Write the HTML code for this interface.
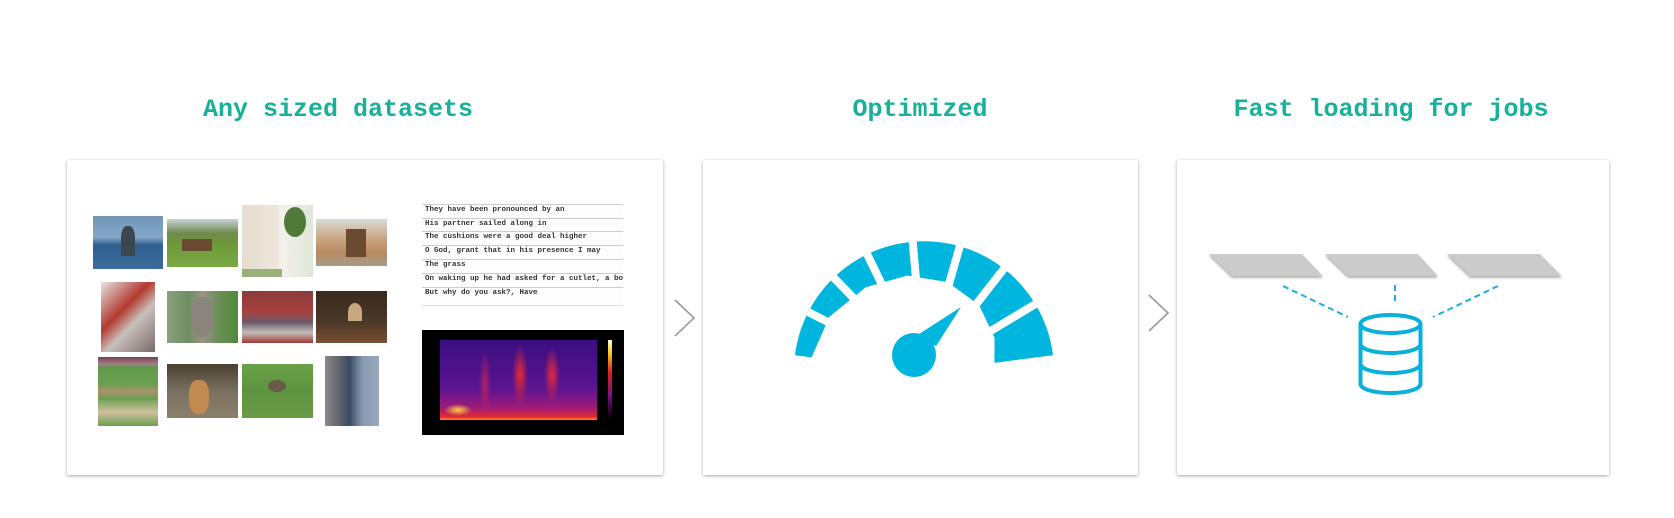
<!DOCTYPE html>
<html><head><meta charset="utf-8"><style>
html,body{margin:0;padding:0;background:#fff;}
body{width:1674px;height:518px;position:relative;overflow:hidden;font-family:"Liberation Sans",sans-serif;}
.t{position:absolute;top:95px;font-family:"Liberation Mono",monospace;font-weight:bold;font-size:25px;color:#17b09a;white-space:nowrap;transform:translateX(-50%);}
.card{position:absolute;top:160px;height:315px;background:#fff;box-shadow:0 1px 3px rgba(0,0,0,.35);}
.im{position:absolute;}
.tx{position:absolute;left:422px;width:201px;font-family:"Liberation Mono",monospace;font-size:7.5px;font-weight:bold;color:#333;border-top:1px solid #ccc;height:13.5px;line-height:11px;padding-left:3px;box-sizing:border-box;background:#fdfdfd;white-space:nowrap;overflow:hidden}
</style></head><body>
<div class="t" style="left:338px">Any sized datasets</div>
<div class="t" style="left:920px">Optimized</div>
<div class="t" style="left:1391px">Fast loading for jobs</div>

<div class="card" style="left:67px;width:596px"></div>
<div class="card" style="left:703px;width:435px"></div>
<div class="card" style="left:1177px;width:432px"></div>

<div class="im" style="left:93px;top:216px;width:70px;height:53px;background:linear-gradient(#6f95b8 0%,#86a6c6 40%,#2f5f8f 55%,#3c6c99 100%)"><div style="position:absolute;left:28px;top:10px;width:14px;height:30px;background:#3a4650;border-radius:40% 40% 0 0"></div></div>
<div class="im" style="left:167px;top:219px;width:71px;height:48px;background:linear-gradient(#c8d2d8 0%,#6f8a4a 30%,#6f9a3a 55%,#7aa845 100%)"><div style="position:absolute;left:15px;top:20px;width:30px;height:12px;background:#6b4a32"></div></div>
<div class="im" style="left:242px;top:205px;width:71px;height:72px;background:linear-gradient(90deg,#e6dccf 0%,#eee6dc 50%,#f3f1ec 55%,#dfe6d8 100%)"><div style="position:absolute;left:42px;top:2px;width:22px;height:30px;background:#4f7a3a;border-radius:50%"></div><div style="position:absolute;left:0;top:64px;width:40px;height:8px;background:#9ab07a"></div></div>
<div class="im" style="left:316px;top:219px;width:71px;height:47px;background:linear-gradient(#d8dcd8 0%,#c9a886 40%,#b88a62 70%,#a79a8a 100%)"><div style="position:absolute;left:30px;top:10px;width:20px;height:28px;background:#6b4a32"></div></div>

<div class="im" style="left:101px;top:282px;width:54px;height:70px;background:linear-gradient(135deg,#e8e2e0,#b23a30 40%,#c8c0bc 60%,#7a6a6a)"></div>
<div class="im" style="left:167px;top:291px;width:71px;height:52px;background:linear-gradient(90deg,#8aa080,#6f8e60 30%,#9a9488 50%,#6f8e5a 70%,#4f8a3a)"><div style="position:absolute;left:24px;top:6px;width:22px;height:40px;background:#8a857c;border-radius:40%"></div></div>
<div class="im" style="left:242px;top:291px;width:71px;height:52px;background:linear-gradient(#8a3a3a 0%,#a84040 40%,#6a5a6a 60%,#c2bcb8 80%,#a03a34 100%)"></div>
<div class="im" style="left:316px;top:291px;width:71px;height:52px;background:linear-gradient(#3a2a1e,#4a3828 60%,#7a5030 100%)"><div style="position:absolute;left:32px;top:12px;width:14px;height:18px;background:#c8a880;border-radius:50% 50% 0 0"></div></div>

<div class="im" style="left:98px;top:357px;width:60px;height:69px;background:linear-gradient(#7a4050 0%,#a08088 10%,#5f9a4a 15%,#6aa050 40%,#b09070 50%,#6aa050 60%,#d0c0a0 80%,#6aa050 100%)"></div>
<div class="im" style="left:167px;top:364px;width:71px;height:54px;background:linear-gradient(#4a4030,#7a7060 50%,#8a806a)"><div style="position:absolute;left:22px;top:16px;width:20px;height:34px;background:#c08a50;border-radius:40%"></div></div>
<div class="im" style="left:242px;top:364px;width:71px;height:54px;background:linear-gradient(#6aa048,#5e9440 50%,#6a9a48)"><div style="position:absolute;left:26px;top:16px;width:18px;height:12px;background:#6a5a4a;border-radius:50%"></div></div>
<div class="im" style="left:325px;top:356px;width:54px;height:70px;background:linear-gradient(90deg,#8a8a8a,#5a5e66 30%,#3a4a66 45%,#8a9ab0 70%,#9aa8c0 100%)"></div>

<div class="tx" style="top:204px">They have been pronounced by an</div>
<div class="tx" style="top:217.5px">His partner sailed along in</div>
<div class="tx" style="top:231px">The cushions were a good deal higher</div>
<div class="tx" style="top:245px">O God, grant that in his presence I may</div>
<div class="tx" style="top:259px">The grass</div>
<div class="tx" style="top:273px">On waking up he had asked for a cutlet, a bottle of</div>
<div class="tx" style="top:287px;border-bottom:1px solid #ddd;height:19px">But why do you ask?, Have</div>

<div class="im" style="left:422px;top:330px;width:202px;height:105px;background:#000">
 <div style="position:absolute;left:18px;top:10px;width:157px;height:80px;background:
 radial-gradient(ellipse 14px 6px at 18px 70px,#ffd040,rgba(255,80,0,0) 100%),
 radial-gradient(ellipse 8px 30px at 80px 35px,#e82a30,rgba(200,30,80,0) 100%),
 radial-gradient(ellipse 8px 28px at 112px 35px,#e02a3a,rgba(200,30,80,0) 100%),
 radial-gradient(ellipse 6px 35px at 45px 45px,#b0206a,rgba(120,20,120,0) 100%),
 linear-gradient(0deg,#ff8a20 0,#e02a30 4%,#a01a78 15%,#5a1490 40%,#3a0e80 100%);"></div>
 <div style="position:absolute;left:186px;top:10px;width:4px;height:80px;background:linear-gradient(#fffbe0,#ffd020 15%,#e02020 40%,#7a1080 70%,#000 100%)"></div>
</div>

<svg width="1674" height="518" style="position:absolute;left:0;top:0">
 <polyline points="675,300 694,318 675,336" fill="none" stroke="#9a9a9a" stroke-width="1.6"/>
 <polyline points="1149,295 1168,313 1149,331" fill="none" stroke="#9a9a9a" stroke-width="1.6"/>
 <g transform="translate(0,-3)">
  <path d="M796.1 357.4 A129 129 0 0 1 1051.9 357.4 L995.4 364.7 L995.6 340.6 L979.9 307.4 L948.1 284.2 L907 277.5 L864.9 289.6 L828.7 319 L810.9 359.3 Z" fill="#00b5de" stroke="#00b5de" stroke-width="2" stroke-linejoin="round"/>
  <g stroke="#fff" stroke-width="8">
   <line x1="924" y1="374" x2="794.8" y2="308.2"/>
   <line x1="924" y1="374" x2="823.2" y2="269.7"/>
   <line x1="924" y1="374" x2="860.5" y2="243.6"/>
   <line x1="924" y1="374" x2="911.4" y2="229.6"/>
   <line x1="924" y1="374" x2="964" y2="234.6"/>
   <line x1="924" y1="374" x2="1013.3" y2="259.7"/>
   <line x1="924" y1="374" x2="1048.3" y2="299.3"/>
  </g>
 </g>
 <polygon points="961,307 936,346 916,336" fill="#00b5de"/>
 <circle cx="914" cy="355" r="22" fill="#00b5de"/>

 <g fill="#cbcbcb" style="filter:drop-shadow(0 2px 1px rgba(0,0,0,.3))">
  <polygon points="1209,254 1302,254 1323,276 1232,276"/>
  <polygon points="1325,254 1418,254 1438,276 1348,276"/>
  <polygon points="1447,254 1540,254 1562,276 1470,276"/>
 </g>
 <g stroke="#1aaed8" stroke-width="2" stroke-dasharray="6,4" fill="none">
  <line x1="1283" y1="286" x2="1348" y2="317"/>
  <line x1="1395" y1="285" x2="1395" y2="302"/>
  <line x1="1498" y1="286" x2="1433" y2="317"/>
 </g>
 <g stroke="#0ab0dc" stroke-width="4" fill="none">
  <ellipse cx="1390.5" cy="324" rx="30" ry="9"/>
  <path d="M1360.5 324 V384 A30 9 0 0 0 1420.5 384 V324"/>
  <path d="M1360.5 344 A30 9 0 0 0 1420.5 344"/>
  <path d="M1360.5 364 A30 9 0 0 0 1420.5 364"/>
 </g>
</svg>
</body></html>
